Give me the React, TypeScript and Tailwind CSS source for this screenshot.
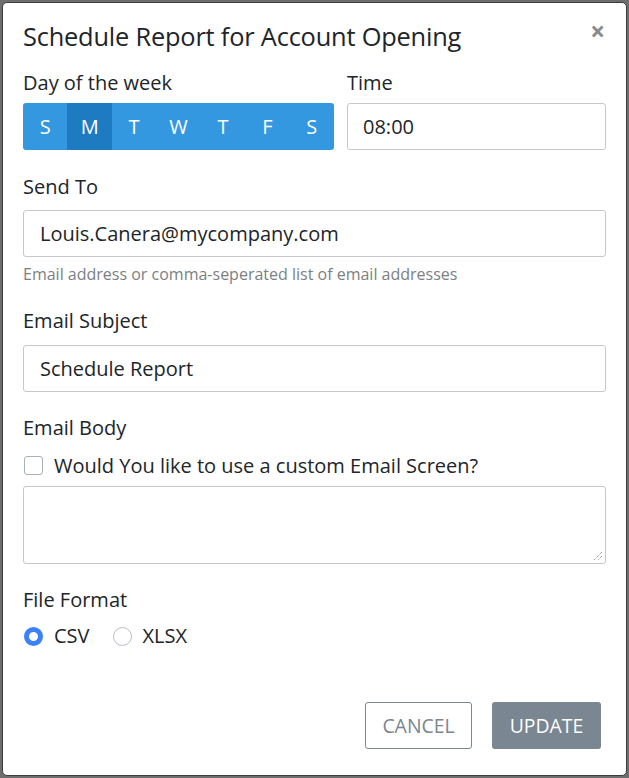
import React from "react";

const days = ["S", "M", "T", "W", "T", "F", "S"];

export default function App() {
  return (
    <div className="w-[629px] h-[778px] bg-[#6e6e6e] p-[2px]" style={{ fontFamily: '"Open Sans", sans-serif' }}>
      <div className="w-full h-full bg-white rounded-[5px] border border-[#3c3c3c] flex flex-col px-[20px] text-[#212529]">
        <div className="flex items-start justify-between pt-[16px]">
          <h1 className="text-[25.4px] leading-[34px] tracking-[-0.2px]">Schedule Report for Account Opening</h1>
          <button className="text-[26px] leading-none text-[#8a8a8a] font-bold -mt-[1px] mr-[1px]">×</button>
        </div>

        <div className="flex gap-[13px] mt-[17px]">
          <div className="w-[311px] flex flex-col">
            <label className="text-[20px] leading-[25px]">Day of the week</label>
            <div className="flex mt-[8px] h-[47px] rounded-[3px] overflow-hidden bg-[#3498e0]">
              {days.map((d, i) => (
                <div
                  key={i}
                  className={`flex-1 flex items-center justify-center text-white text-[20px] ${i === 1 ? "bg-[#1e7bc1]" : ""}`}
                >
                  {d}
                </div>
              ))}
            </div>
          </div>
          <div className="flex-1 flex flex-col">
            <label className="text-[20px] leading-[25px]">Time</label>
            <div className="mt-[8px] h-[47px] border border-[#c4c8cc] rounded-[3px] flex items-center px-[15px] text-[20px]">08:00</div>
          </div>
        </div>

        <label className="text-[20px] leading-[25px] mt-[24px]">Send To</label>
        <div className="mt-[11px] h-[47px] border border-[#c4c8cc] rounded-[3px] flex items-center px-[16px] text-[20px]">Louis.Canera@mycompany.com</div>
        <p className="text-[16px] text-[#7b7f84] mt-[6px] leading-[22px]">Email address or comma-seperated list of email addresses</p>

        <label className="text-[20px] leading-[25px] mt-[23px]">Email Subject</label>
        <div className="mt-[12px] h-[47px] border border-[#c4c8cc] rounded-[3px] flex items-center px-[16px] text-[20px]">Schedule Report</div>

        <label className="text-[20px] leading-[25px] mt-[23px]">Email Body</label>
        <div className="flex items-center mt-[13px] gap-[11px]">
          <span className="w-[19px] h-[19px] border border-[#a9b0b6] rounded-[3px] ml-[1px]" />
          <span className="text-[20px] leading-[25px]">Would You like to use a custom Email Screen?</span>
        </div>
        <div className="mt-[8px] h-[78px] border border-[#c4c8cc] rounded-[3px] relative">
          <svg className="absolute right-[2px] bottom-[2px]" width="11" height="11" viewBox="0 0 11 11">
            <path d="M10 2 L2 10 M10 6 L6 10" stroke="#777" strokeWidth="1" strokeDasharray="1 1" />
          </svg>
        </div>

        <label className="text-[20px] leading-[25px] mt-[23px]">File Format</label>
        <div className="flex items-center mt-[9px]">
          <span className="w-[19px] h-[19px] rounded-full border-[5px] border-[#3b82f6] bg-white ml-[1px]" />
          <span className="text-[20px] ml-[11px]">CSV</span>
          <span className="w-[19px] h-[19px] rounded-full border border-[#b8bec4] ml-[23px]" />
          <span className="text-[20px] ml-[11px]">XLSX</span>
        </div>

        <div className="flex justify-end gap-[20px] mt-[51px] pr-[5px]">
          <button className="w-[107px] h-[47px] border border-[#7a8691] rounded-[3px] text-[#7a8691] text-[19.4px]">CANCEL</button>
          <button className="w-[109px] h-[47px] bg-[#7a8691] rounded-[3px] text-white text-[19.4px]">UPDATE</button>
        </div>
      </div>
    </div>
  );
}
